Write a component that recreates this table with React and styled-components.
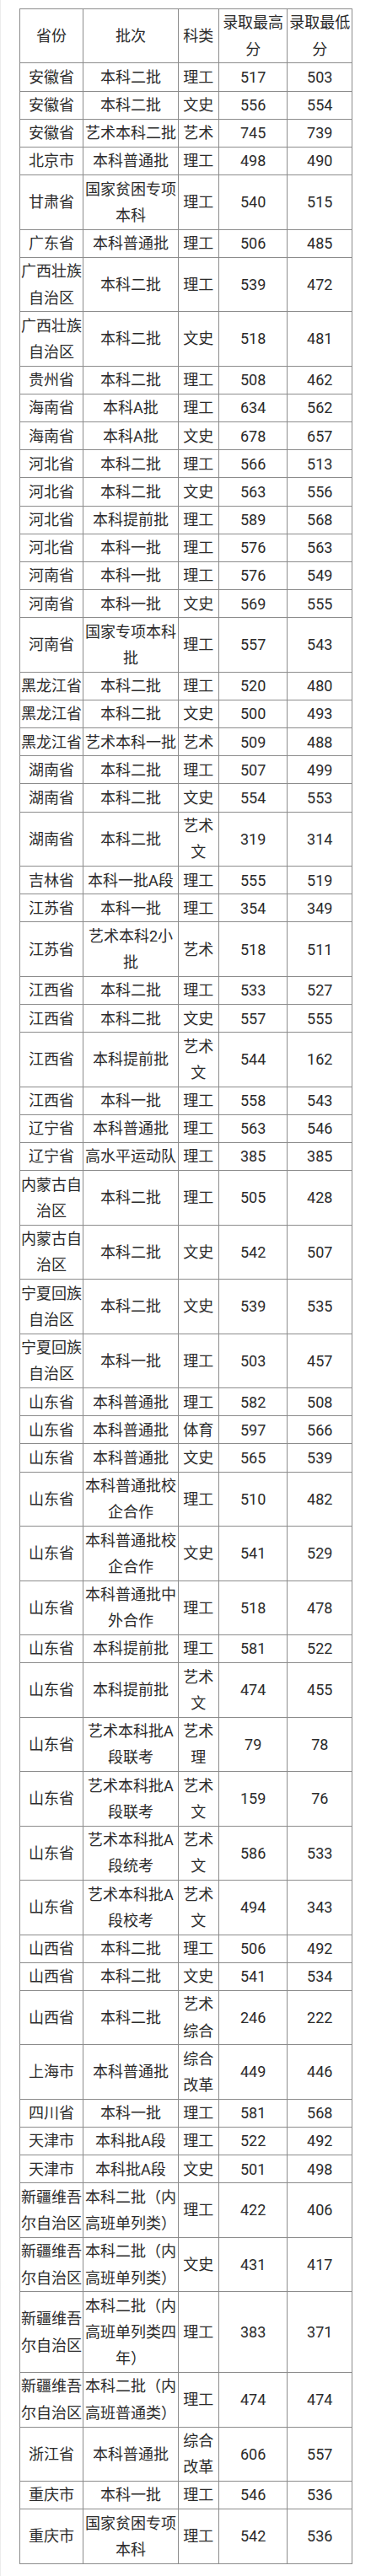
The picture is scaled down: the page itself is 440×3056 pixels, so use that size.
import React from 'react'
import styled, { createGlobalStyle } from 'styled-components'

const GlobalStyle = createGlobalStyle`
    html, body {
        margin: 0;
        padding: 0;
        background: #fff;
    }
    body {
        font-family: Roboto, "Noto Sans CJK SC", "Noto Sans", sans-serif;
        color: #2b2b2b;
    }
`

const rows = [
    ['安徽省', '本科二批', '理工', '517', '503'],
    ['安徽省', '本科二批', '文史', '556', '554'],
    ['安徽省', '艺术本科二批', '艺术', '745', '739'],
    ['北京市', '本科普通批', '理工', '498', '490'],
    ['甘肃省', '国家贫困专项本科', '理工', '540', '515'],
    ['广东省', '本科普通批', '理工', '506', '485'],
    ['广西壮族自治区', '本科二批', '理工', '539', '472'],
    ['广西壮族自治区', '本科二批', '文史', '518', '481'],
    ['贵州省', '本科二批', '理工', '508', '462'],
    ['海南省', '本科A批', '理工', '634', '562'],
    ['海南省', '本科A批', '文史', '678', '657'],
    ['河北省', '本科二批', '理工', '566', '513'],
    ['河北省', '本科二批', '文史', '563', '556'],
    ['河北省', '本科提前批', '理工', '589', '568'],
    ['河北省', '本科一批', '理工', '576', '563'],
    ['河南省', '本科一批', '理工', '576', '549'],
    ['河南省', '本科一批', '文史', '569', '555'],
    ['河南省', '国家专项本科批', '理工', '557', '543'],
    ['黑龙江省', '本科二批', '理工', '520', '480'],
    ['黑龙江省', '本科二批', '文史', '500', '493'],
    ['黑龙江省', '艺术本科一批', '艺术', '509', '488'],
    ['湖南省', '本科二批', '理工', '507', '499'],
    ['湖南省', '本科二批', '文史', '554', '553'],
    ['湖南省', '本科二批', '艺术文', '319', '314'],
    ['吉林省', '本科一批A段', '理工', '555', '519'],
    ['江苏省', '本科一批', '理工', '354', '349'],
    ['江苏省', '艺术本科2小批', '艺术', '518', '511'],
    ['江西省', '本科二批', '理工', '533', '527'],
    ['江西省', '本科二批', '文史', '557', '555'],
    ['江西省', '本科提前批', '艺术文', '544', '162'],
    ['江西省', '本科一批', '理工', '558', '543'],
    ['辽宁省', '本科普通批', '理工', '563', '546'],
    ['辽宁省', '高水平运动队', '理工', '385', '385'],
    ['内蒙古自治区', '本科二批', '理工', '505', '428'],
    ['内蒙古自治区', '本科二批', '文史', '542', '507'],
    ['宁夏回族自治区', '本科二批', '文史', '539', '535'],
    ['宁夏回族自治区', '本科一批', '理工', '503', '457'],
    ['山东省', '本科普通批', '理工', '582', '508'],
    ['山东省', '本科普通批', '体育', '597', '566'],
    ['山东省', '本科普通批', '文史', '565', '539'],
    ['山东省', '本科普通批校企合作', '理工', '510', '482'],
    ['山东省', '本科普通批校企合作', '文史', '541', '529'],
    ['山东省', '本科普通批中外合作', '理工', '518', '478'],
    ['山东省', '本科提前批', '理工', '581', '522'],
    ['山东省', '本科提前批', '艺术文', '474', '455'],
    ['山东省', '艺术本科批A段联考', '艺术理', '79', '78'],
    ['山东省', '艺术本科批A段联考', '艺术文', '159', '76'],
    ['山东省', '艺术本科批A段统考', '艺术文', '586', '533'],
    ['山东省', '艺术本科批A段校考', '艺术文', '494', '343'],
    ['山西省', '本科二批', '理工', '506', '492'],
    ['山西省', '本科二批', '文史', '541', '534'],
    ['山西省', '本科二批', '艺术综合', '246', '222'],
    ['上海市', '本科普通批', '综合改革', '449', '446'],
    ['四川省', '本科一批', '理工', '581', '568'],
    ['天津市', '本科批A段', '理工', '522', '492'],
    ['天津市', '本科批A段', '文史', '501', '498'],
    ['新疆维吾尔自治区', '本科二批（内高班单列类）', '理工', '422', '406'],
    ['新疆维吾尔自治区', '本科二批（内高班单列类）', '文史', '431', '417'],
    ['新疆维吾尔自治区', '本科二批（内高班单列类四年）', '理工', '383', '371'],
    ['新疆维吾尔自治区', '本科二批（内高班普通类）', '理工', '474', '474'],
    ['浙江省', '本科普通批', '综合改革', '606', '557'],
    ['重庆市', '本科一批', '理工', '546', '536'],
    ['重庆市', '国家贫困专项本科', '理工', '542', '536'],
]

const headers = ['省份', '批次', '科类', '录取最高分', '录取最低分']
const colWidths = [75.6, 112.4, 48.3, 81.3, 77]

export default function App () {
    return (
        <>
        <GlobalStyle/>
        <Page>
            <ScoreTable>
                <colgroup>
                    {colWidths.map((w, i) => <col key={`col${i}`} style={{width: `${w}px`}}/>)}
                </colgroup>
                <tbody>
                    <tr>
                        {headers.map(h => <Cell key={h}>{h}</Cell>)}
                    </tr>
                    {rows.map((row, index) =>
                        <tr key={`row${index}`}>
                            {row.map((value, i) => <Cell key={`${index}-${i}`}>{value}</Cell>)}
                        </tr>
                    )}
                </tbody>
            </ScoreTable>
        </Page>
        </>
    )
}

const Page = styled.div`
    min-height: 3056px;
    box-sizing: border-box;
    padding-top: 10px;
    border-left: 1px solid #ececec;
`

const ScoreTable = styled.table`
    width: 394.6px;
    margin: 0 auto;
    border-collapse: collapse;
    table-layout: fixed;
    border: 1px solid #8c8c8c;
`

const Cell = styled.td`
    border: 1px solid #8c8c8c;
    padding: 0.45px 1px;
    font-size: 18px;
    line-height: 31.3px;
    text-align: center;
    vertical-align: middle;
    font-weight: 400;
    word-break: break-all;
`
